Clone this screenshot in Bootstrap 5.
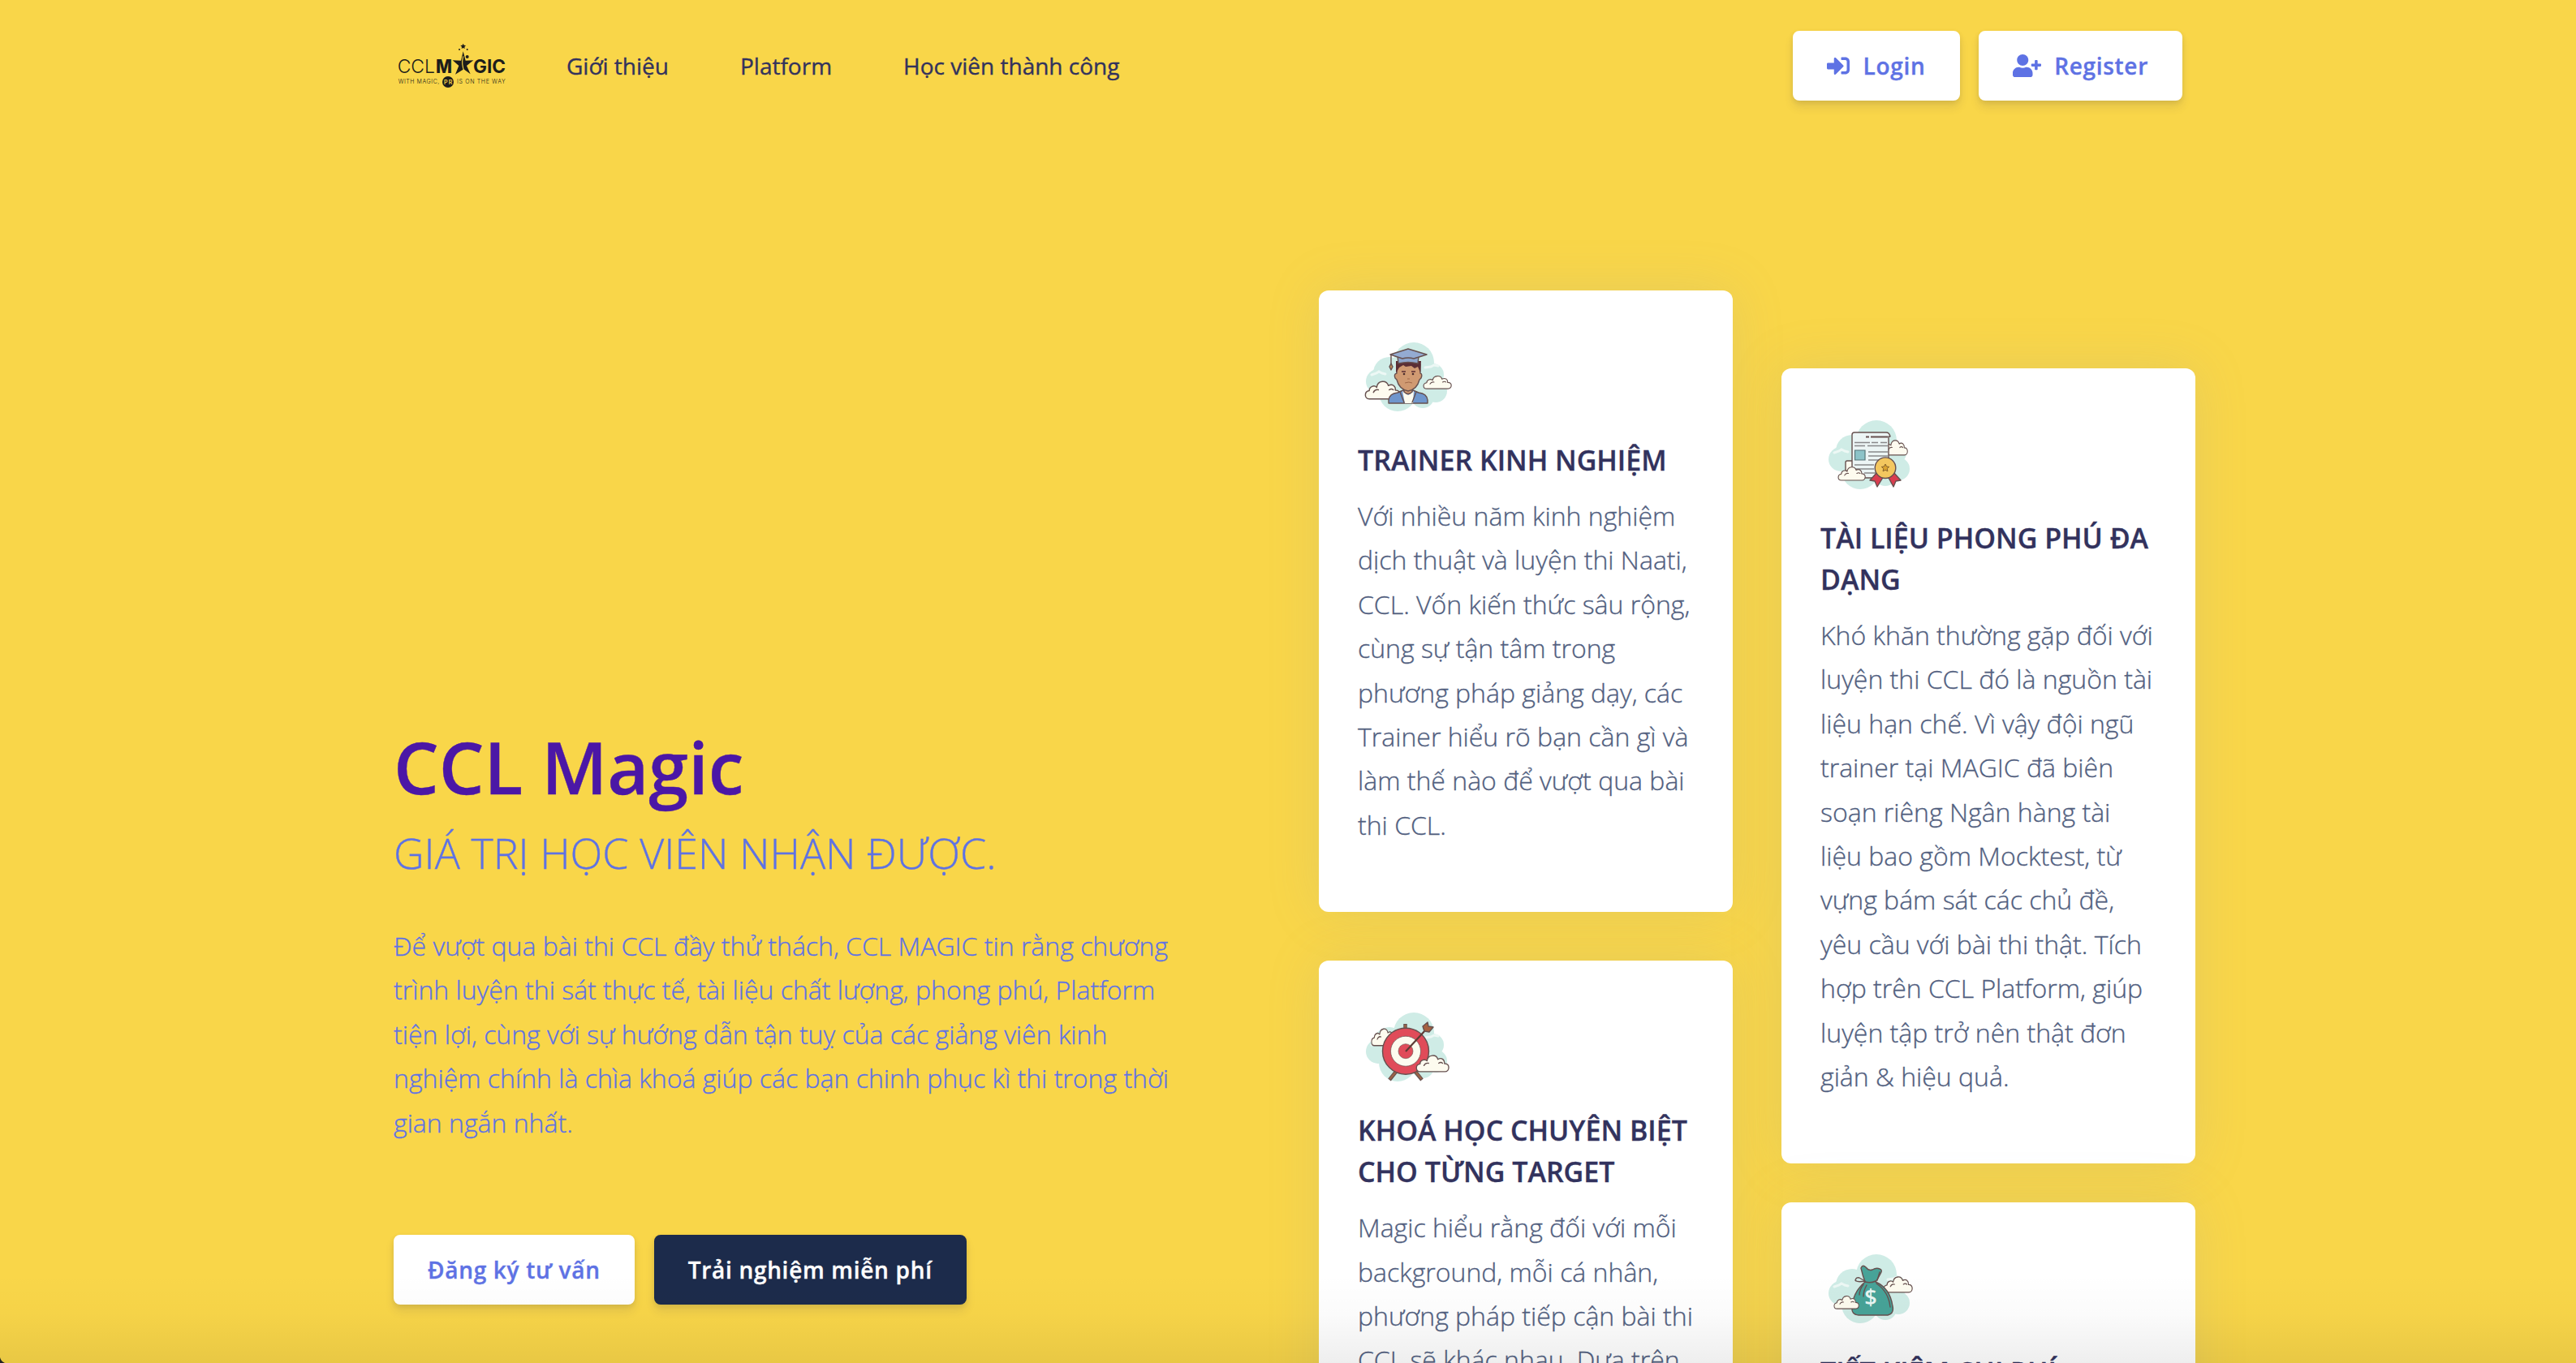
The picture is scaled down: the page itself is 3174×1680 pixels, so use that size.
<!DOCTYPE html>
<html lang="vi">
<head>
<meta charset="utf-8">
<meta name="viewport" content="width=device-width, initial-scale=1">
<title>CCL Magic</title>
<link href="https://cdn.jsdelivr.net/npm/bootstrap@5.3.0/dist/css/bootstrap.min.css" rel="stylesheet">
<style>
  body { background:#f9d649; font-family:"Open Sans","Noto Sans",sans-serif; font-size:32px; font-weight:300; line-height:1.7; color:#525f7f; -webkit-text-stroke:.35px currentColor; }
  .page { height:1680px; }
  .site-nav { padding:38px 0 0; height:358px; }
  .nav-inner { max-width:2204px; height:86px; }
  .brand-art { width:140px; height:60px; -webkit-text-stroke:0; }
  .menu { margin-left:73px; gap:88px; }
  .menu .nav-link { padding:0; font-size:28px; font-weight:400; line-height:42px; color:#32325d; }
  .btn-magic { --bs-btn-padding-x:40px; --bs-btn-padding-y:20px; --bs-btn-border-width:2px; --bs-btn-border-radius:8px; --bs-btn-font-size:28px; --bs-btn-font-weight:600; --bs-btn-line-height:42px; letter-spacing:.025em; white-space:nowrap; box-shadow:0 8px 12px rgba(50,50,93,.11),0 2px 6px rgba(0,0,0,.08); }
  .btn-plain { --bs-btn-bg:#fff; --bs-btn-border-color:#fff; --bs-btn-color:#5e72e4; }
  .btn-navy { --bs-btn-bg:#1c2b4b; --bs-btn-border-color:#1c2b4b; --bs-btn-color:#fff; }
  .btn-magic svg { height:28px; margin-right:16.6px; fill:currentColor; }
  .hero { padding-left:16px; }
  .hero-wrap { width:2280px; padding:0; }
  .hero-wrap .row { --bs-gutter-x:60px; margin:0; }
  .intro { padding-top:521px; color:#5e72e4; }
  .intro h1 { font-size:88px; font-weight:600; line-height:132px; color:#4b17a6; margin:0; }
  .intro h2 { font-size:52px; font-weight:300; line-height:80px; margin:0; }
  .intro p { margin:48px 0 0; width:1000px; }
  .actions { margin-top:111px; gap:24px; }
  .perk { border:0; border-radius:12px; box-shadow:0 0 64px rgba(136,152,170,.17); width:510px; }
  .perk .card-body { padding:48px 48px 80px; }
  .perk svg { width:120px; height:120px; display:block; margin-bottom:16px; -webkit-text-stroke:0; }
  .perk h5 { font-size:34px; font-weight:600; line-height:51px; margin:0 0 16px; color:#32325d; }
  .perk p { margin:0; width:430px; }
  .col-a { gap:60px; }
  .col-b { gap:48px; padding-top:96px !important; }
  .fade-foot { height:110px; background:linear-gradient(rgba(0,0,0,0),rgba(0,0,0,.015) 45%,rgba(0,0,0,.065)); pointer-events:none; }
  .ln { stroke:#66504f; stroke-width:1.4; stroke-linejoin:round; stroke-linecap:round; }
</style>
</head>
<body>
<svg width="0" height="0" class="position-absolute">
  <symbol id="sky" viewBox="0 0 120 120"><g fill="#cfece6"><circle cx="69" cy="41" r="25"/><circle cx="39" cy="54" r="20"/><circle cx="25" cy="64" r="15"/><circle cx="49" cy="78" r="23"/><circle cx="80" cy="83" r="14"/><circle cx="96" cy="76" r="14"/><circle cx="92" cy="56" r="14"/><circle cx="66" cy="62" r="26"/></g><path d="M17 56l6-2 3-2 4 2 4 1M83 47l7-1 4-2 5 1" stroke="#edf8f5" stroke-width="3" fill="none" stroke-linecap="round"/></symbol>
  <symbol id="puff" viewBox="0 0 44 24" preserveAspectRatio="none"><path class="ln" fill="#fdfbef" d="M6 22.800C0 22.800-.5 14 6 13C6 8 12 6 15 9C16 .5 27 0 29 7C34 4 38 8 37.500 12.500C45 12 44.500 22.800 38 22.800Z"/><path class="ln" fill="none" d="M11 15q2-4 6-3M30 12q3-2 5 0" stroke-width="1"/></symbol>
</svg>
<div class="page position-relative overflow-hidden">
  <nav class="site-nav">
    <div class="nav-inner d-flex align-items-center mx-auto">
      <a href="#" class="d-block lh-1">
        <svg class="brand-art" viewBox="45 63 420 180" fill="#1d1d1b" font-family="Inter,sans-serif">
          <text x="59" y="180" font-size="69" font-weight="300" textLength="139" lengthAdjust="spacingAndGlyphs">CCL</text>
          <text x="201" y="180" font-size="69" font-weight="800" textLength="60" lengthAdjust="spacingAndGlyphs">M</text>
          <text x="339" y="180" font-size="69" font-weight="700" textLength="120" lengthAdjust="spacingAndGlyphs">GIC</text>
          <path d="M302 100l9 34 29-1-25 20 14 31-25-18-31 19 13-32-23-20 31 1z"/>
          <path d="M302 118q-8 32 5 56" stroke="#f9d649" stroke-width="3.500" fill="none"/>
          <circle cx="317" cy="120" r="6"/><circle cx="288" cy="93" r="3"/><circle cx="317" cy="93" r="3"/>
          <path d="M302 71l3 6 7 1-5 5 1 7-6-3-6 3 1-7-5-5 7-1z"/>
          <text x="62" y="220" font-size="21" font-weight="300" textLength="152">WITH MAGIC,</text>
          <circle cx="246" cy="213" r="21"/>
          <text x="231" y="221" font-size="21" font-weight="600" fill="#f9d649" textLength="31">PR</text>
          <text x="279" y="220" font-size="21" font-weight="300" textLength="179">IS ON THE WAY</text>
        </svg>
      </a>
      <div class="menu d-flex">
        <a class="nav-link" href="#">Giới thiệu</a>
        <a class="nav-link" href="#">Platform</a>
        <a class="nav-link" href="#">Học viên thành công</a>
      </div>
      <div class="d-flex ms-auto" style="gap:23px">
        <a class="btn btn-magic btn-plain d-flex align-items-center" href="#"><svg viewBox="0 0 512 512"><path d="M416 448h-84c-6.600 0-12-5.400-12-12v-40c0-6.600 5.400-12 12-12h84c17.700 0 32-14.300 32-32V160c0-17.700-14.300-32-32-32h-84c-6.600 0-12-5.400-12-12V76c0-6.600 5.400-12 12-12h84c53 0 96 43 96 96v192c0 53-43 96-96 96zm-47-201L201 79c-15-15-41-4.500-41 17v96H24c-13.300 0-24 10.700-24 24v96c0 13.300 10.700 24 24 24h136v96c0 21.500 26 32 41 17l168-168c9.300-9.400 9.300-24.600 0-34z"/></svg>Login</a>
        <a class="btn btn-magic btn-plain d-flex align-items-center" href="#"><svg viewBox="0 0 640 512"><path d="M624 208h-64v-64c0-8.800-7.200-16-16-16h-32c-8.800 0-16 7.200-16 16v64h-64c-8.800 0-16 7.200-16 16v32c0 8.800 7.200 16 16 16h64v64c0 8.800 7.200 16 16 16h32c8.800 0 16-7.200 16-16v-64h64c8.800 0 16-7.200 16-16v-32c0-8.800-7.200-16-16-16zm-400 48c70.700 0 128-57.300 128-128S294.700 0 224 0 96 57.300 96 128s57.300 128 128 128zm89.600 32h-16.700c-22.200 10.200-46.900 16-73.600 16s-51.300-5.800-73.600-16h-16.700C60.200 288 0 348.200 0 422.400V464c0 26.500 21.500 48 48 48h352c26.500 0 48-21.500 48-48v-41.600c0-74.200-60.200-134.400-134.400-134.400z"/></svg>Register</a>
      </div>
    </div>
  </nav>

  <main class="hero">
    <div class="hero-wrap mx-auto">
      <div class="row">
        <div class="col-6 intro">
          <h1>CCL Magic</h1>
          <h2>GIÁ TRỊ HỌC VIÊN NHẬN ĐƯỢC.</h2>
          <p>Để vượt qua bài thi CCL đầy thử thách, CCL MAGIC tin rằng chương<br>trình luyện thi sát thực tế, tài liệu chất lượng, phong phú, Platform<br>tiện lợi, cùng với sự hướng dẫn tận tuỵ của các giảng viên kinh<br>nghiệm chính là chìa khoá giúp các bạn chinh phục kì thi trong thời<br>gian ngắn nhất.</p>
          <div class="actions d-flex">
            <a class="btn btn-magic btn-plain" href="#">Đăng ký tư vấn</a>
            <a class="btn btn-magic btn-navy" href="#">Trải nghiệm miễn phí</a>
          </div>
        </div>
        <div class="col-6 p-0">
          <div class="row">
            <div class="col-6 col-a d-flex flex-column">
              <div class="card perk"><div class="card-body">
                <svg viewBox="0 0 120 120"><use href="#sky"/>
                  <use href="#puff" x="8" y="62" width="45" height="25"/><use href="#puff" x="80" y="56" width="36" height="18"/>
                  <path class="ln" fill="#6f96cc" d="M38 91v-4q1-8 11-9l7-3h12l7 3q10 1 11 9v4z"/>
                  <path fill="#fdfbef" d="M55 76l7 5 7-5-1 15h-10z"/><path class="ln" fill="none" stroke="#3e5f96" d="M52 77l5 13M72 77l-5 13"/>
                  <path class="ln" fill="#d09a72" d="M57 70v7q5 5 10 0v-7z"/>
                  <path class="ln" fill="#d09a72" d="M48 43h29v11q3 1 1 6l-2 2q-3 12-14 14q-11-2-14-14l-2-2q-2-5 2-6z"/>
                  <path fill="#5b2e35" d="M47 54V39h31l-1 14-3-7-4 2-4-3-7 1-3-2-5 3z"/>
                  <path d="M54 52h5M66 52h5" stroke="#5b2e35" stroke-width="1.300"/><circle cx="57" cy="55" r="1.300" fill="#4a2c2c"/><circle cx="68" cy="55" r="1.300" fill="#4a2c2c"/><path d="M61 61h3M58 66q5-2 9 0" stroke="#a06848" fill="none"/>
                  <path class="ln" fill="#8fa6cc" d="M49 33l1 9q12-3 24 0l1-9z"/><path class="ln" fill="#94abd2" d="M40 31l22-7 23 7-16 5q-7-2-14 0z"/>
                  <path class="ln" fill="none" d="M41 32v11"/><path class="ln" fill="#c48f5a" d="M41 42l2 4-2 4-2-4z"/></svg>
                <h5>TRAINER KINH NGHIỆM</h5>
                <p>Với nhiều năm kinh nghiệm<br>dịch thuật và luyện thi Naati,<br>CCL. Vốn kiến thức sâu rộng,<br>cùng sự tận tâm trong<br>phương pháp giảng dạy, các<br>Trainer hiểu rõ bạn cần gì và<br>làm thế nào để vượt qua bài<br>thi CCL.</p>
              </div></div>
              <div class="card perk"><div class="card-body">
                <svg viewBox="0 0 120 120"><use href="#sky"/>
                  <use href="#puff" x="16" y="34" width="32" height="24"/>
                  <path d="M58.500 30v8M47 89l-8 10M71 89l8 10" stroke="#66504f" stroke-width="4.500"/><path d="M58.500 31v8M47 89l-7.500 9M71 89l7.500 9" stroke="#9a6348" stroke-width="2.500"/>
                  <circle class="ln" cx="59" cy="63.700" r="28.500" fill="#e04b59"/><circle cx="59" cy="63.700" r="18.500" fill="#fdfbef" stroke="#66504f" stroke-width=".7"/><circle cx="59" cy="63.700" r="9" fill="#e04b59" stroke="#66504f" stroke-width=".6"/>
                  <path d="M59 64l25-27" stroke="#5e3b35" stroke-width="2.200"/><path class="ln" fill="#a6603f" d="M82 39l-2-6 6-5 1 5 6 1-5 6z"/>
                  <use href="#puff" x="71" y="67" width="42" height="23"/></svg>
                <h5>KHOÁ HỌC CHUYÊN BIỆT CHO TỪNG TARGET</h5>
                <p>Magic hiểu rằng đối với mỗi<br>background, mỗi cá nhân,<br>phương pháp tiếp cận bài thi<br>CCL sẽ khác nhau. Dựa trên</p>
              </div></div>
            </div>
            <div class="col-6 col-b d-flex flex-column">
              <div class="card perk"><div class="card-body">
                <svg viewBox="0 0 120 120"><use href="#sky"/>
                  <use href="#puff" x="76" y="39" width="32" height="21"/>
                  <path class="ln" fill="#fdfbef" d="M31 78V68q0-2 2-2h8v15z"/>
                  <path class="ln" fill="#ecf5f5" d="M39 87V34q0-3 3-3h39q4 0 5 5h-2v51z"/>
                  <path d="M56 36.500h27" stroke="#66504f" stroke-width="2" stroke-dasharray="4 2 30"/><path d="M42 43.500h19M63 43.500h8M74 43.500h8M42 47.500h13M58 47.500h25M59 55h24M59 60h24M59 65h24M42 71h24M42 76h24M54 81h14" stroke="#88898b" stroke-width="1.500"/>
                  <path fill="#8cc3c8" stroke="#57777a" stroke-width="1.200" d="M42.500 53H55v12H42.500z"/>
                  <path class="ln" fill="#d93d4f" d="M70 80l-9 10 6 1 3 7 8-13zM90 80l9 10-6 1-3 7-7-13z"/>
                  <circle class="ln" cx="80" cy="74.700" r="12.800" fill="#f3c75f"/><path d="M80 70l1.500 3 3.200.4-2.400 2.200.6 3.300-2.900-1.600-2.900 1.600.6-3.300-2.400-2.200 3.200-.4z" fill="#dba32f" stroke="#85612d"/>
                  <use href="#puff" x="21" y="72" width="35" height="19"/></svg>
                <h5>TÀI LIỆU PHONG PHÚ ĐA DẠNG</h5>
                <p>Khó khăn thường gặp đối với<br>luyện thi CCL đó là nguồn tài<br>liệu hạn chế. Vì vậy đội ngũ<br>trainer tại MAGIC đã biên<br>soạn riêng Ngân hàng tài<br>liệu bao gồm Mocktest, từ<br>vựng bám sát các chủ đề,<br>yêu cầu với bài thi thật. Tích<br>hợp trên CCL Platform, giúp<br>luyện tập trở nên thật đơn<br>giản &amp; hiệu quả.</p>
              </div></div>
              <div class="card perk"><div class="card-body">
                <svg viewBox="0 0 120 120"><use href="#sky"/>
                  <use href="#puff" x="77" y="42" width="37" height="22"/>
                  <path class="ln" fill="#47a398" stroke-width="2" d="M55 50q-3-8-5-17q2-5 6-1q4 5 8 3q5-3 9-1q4 1 1 6q-3 6-6 10q18 8 21 30q2 9-6 11H47q-9-1-8-9q0-18 16-32z"/>
                  <path class="ln" fill="none" d="M55 50q7 2 13-1M53 53q-5 7-5 13M57 54q-4 7-4 14M69 52q15 10 17 29M70 48l3-10M55 49q-10 2-12-1q1-4 5-3l7 4"/>
                  <text x="62" y="78.500" font-family="Open Sans,sans-serif" font-weight="600" font-size="27" text-anchor="middle" fill="#e9f6f3">$</text>
                  <use href="#puff" x="16" y="66" width="32" height="18"/></svg>
                <h5 class="text-nowrap">TIẾT KIỆM CHI PHÍ</h5>
              </div></div>
            </div>
          </div>
        </div>
      </div>
    </div>
  </main>
  <div class="fade-foot position-absolute bottom-0 start-0 end-0"></div>
  <svg class="position-absolute bottom-0 start-0" width="6" height="7" viewBox="0 0 6 7"><path d="M0 0q1 5 6 7H0z" fill="#222"/></svg>
</div>
<script src="https://cdn.jsdelivr.net/npm/bootstrap@5.3.0/dist/js/bootstrap.bundle.min.js"></script>
</body>
</html>
